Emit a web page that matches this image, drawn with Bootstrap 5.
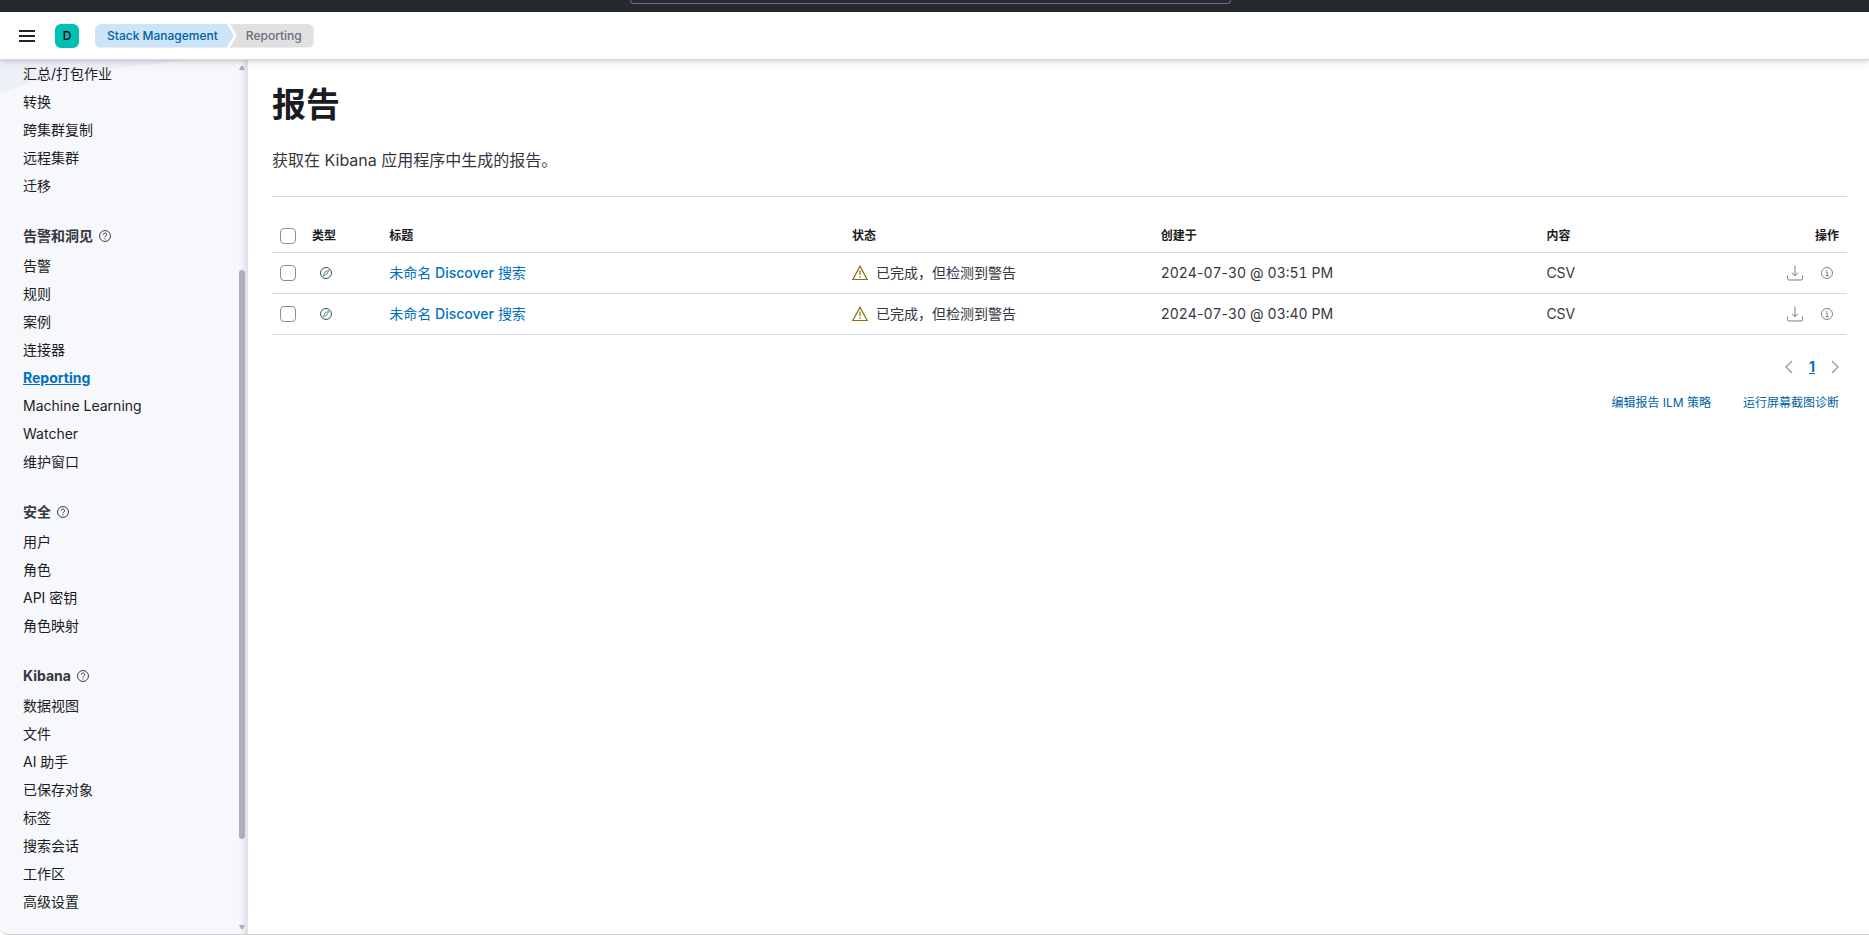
<!DOCTYPE html>
<html lang="zh-CN">
<head>
<meta charset="utf-8">
<meta name="viewport" content="width=device-width, initial-scale=1">
<title>Reporting - Stack Management</title>
<link href="https://cdn.jsdelivr.net/npm/bootstrap@5.3.0/dist/css/bootstrap.min.css" rel="stylesheet">
<style>
body { font-family: Inter, "Noto Sans CJK SC", sans-serif; font-size: 14px; line-height: 20px; color: #343741; background: #fff; }
a { color: #0071c2; text-decoration: none; }
a:hover { text-decoration: underline; }
.darkbar { height: 12px; padding-right: 8px; background: #25282f; }
.global-search { width: 601px; height: 4px; border: 1px solid #69707d; border-top: 0; border-radius: 0 0 4px 4px; }
.appbar { height: 48px; padding-left: 19px; border-bottom: 1px solid #d3dae6; box-shadow: 0 1px 4px rgba(0,0,0,.15), 0 3px 10px rgba(0,0,0,.07); background: #fff; z-index: 2; }
.menu-btn { width: 16px; height: 16px; margin-right: 20px; }
.space-btn { width: 24px; height: 24px; border-radius: 6px; background: #00bfb3; color: #000; font-size: 12px; line-height: 24px; font-weight: 500; }
.crumbs { font-size: 12px; line-height: 24px; font-weight: 500; }
.crumb-first { padding: 0 16px 0 12px; color: #0061a6; background: #cce4f5; border-radius: 6px 0 0 6px; clip-path: polygon(0 0, calc(100% - 7px) 0, 100% 50%, calc(100% - 7px) 100%, 0 100%); }
.crumb-last { margin-left: -4px; padding: 0 12px 0 16px; color: #69707d; background: #e0e0e1; border-radius: 0 6px 6px 0; clip-path: polygon(0 0, 100% 0, 100% 100%, 0 100%, 7px 50%); }
.side { width: 248px; background: #f6f8fc; border-bottom: 1px solid #d0d0d3; border-radius: 0 0 0 8px; box-shadow: inset -3px 0 #e2e3e9, inset -9px 0 6px -5px #dfe1e8; }
.side-art { width: 200px; height: 36px; }
.side-list { padding: 0 12px 18px 23px; }
.side-list li { height: 28px; line-height: 28px; }
.side-list a { color: #1a1c21; }
.side-list a.current { color: #0071c2; font-weight: 700; text-decoration: underline; }
.side h2 { font-size: 14px; line-height: 24px; font-weight: 700; margin: 24px 0 4px; gap: 6px; }
.scroller { width: 6px; top: 5px; bottom: 4px; right: 3px; }
.thumb { background: #abb0ba; border-radius: 3px; flex: 569 0 0; }
.page-body { padding: 25px 22px 24px 24px; border-bottom: 1px solid #d0d0d3; }
h1 { font-size: 34px; line-height: 40px; font-weight: 700; color: #1a1c21; margin: 0 0 23px; }
.intro { font-size: 16px; line-height: 24px; padding-bottom: 24px; margin-bottom: 23px; border-bottom: 1px solid #d3dae6; }
.reports { table-layout: fixed; width: 100%; border-collapse: separate; border-spacing: 0; }
.reports th, .reports td { padding: 0 8px; border-bottom: 1px solid #d3dae6; vertical-align: middle; }
.reports th { height: 33px; font-size: 12px; font-weight: 600; color: #1a1c21; }
.reports td { height: 41px; }
.reports .form-check-input { display: block; width: 16px; height: 16px; margin: 0; border: 1px solid #8b8d93; border-radius: 4px; }
.created b { font-weight: 400; font-variant-numeric: tabular-nums; }
.icon-btn { width: 16px; height: 16px; color: #7b7d83; }
.icon { display: block; flex: none; fill: none; stroke: currentColor; }
.shape { display: block; flex: none; }
.pager { padding: 22px 8px 0 0; gap: 16px; color: #98a2b3; }
.pager a { font-weight: 700; text-decoration: underline; }
.foot { font-size: 12px; padding: 16px 8px 0 0; gap: 32px; }
.foot a { color: #0061a6; }
</style>
</head>
<body class="d-flex flex-column min-vh-100">
<svg class="d-none" aria-hidden="true">
  <symbol id="help" viewBox="0 0 16 16"><g stroke-width="1.300"><circle cx="8" cy="8" r="7.300"/><path d="M5.800 6.200a2.200 2.200 0 1 1 3.400 1.800C8.300 8.600 8 8.900 8 9.900M8 11.200v1.400"/></g></symbol>
  <symbol id="compass" viewBox="0 0 16 16"><circle cx="8" cy="8" r="7.300" stroke="#343741" stroke-width="1.200"/><path stroke="#017d73" d="M11.800 4.200 9.300 9.300 4.200 11.800 6.700 6.700z"/></symbol>
  <symbol id="warning" viewBox="0 0 16 16"><path stroke-width="1.200" d="M8 1.200 15.200 14.500H.800zM8 5.500V10M8 11.200v1.500"/></symbol>
  <symbol id="download" viewBox="0 0 16 16"><path d="M8 .500v10M4.800 7.600 8 10.700l3.200-3.100M.500 10.500v3a1.500 1.500 0 0 0 1.500 1.500h12a1.500 1.500 0 0 0 1.500-1.500v-3"/></symbol>
  <symbol id="info" viewBox="0 0 16 16"><g stroke-width="1.300"><circle cx="8" cy="8" r="7.300"/><path d="M6.300 6.700H8.300v4.700M6 11.500h4.600M7.700 3.700v1.500"/></g></symbol>
</svg>

<div class="darkbar d-flex justify-content-center align-items-start"><div class="global-search"></div></div>
<header class="appbar d-flex align-items-center position-relative">
  <button class="menu-btn btn border-0 p-0 text-dark" aria-label="菜单"><svg class="icon" width="16" height="16" stroke-width="2"><path d="M0 3h16M0 8h16M0 13h16"/></svg></button>
  <button class="space-btn btn border-0 p-0 me-3">D</button>
  <nav class="crumbs d-flex" aria-label="breadcrumb"><a class="crumb-first" href="#">Stack Management</a><span class="crumb-last">Reporting</span></nav>
</header>

<div class="d-flex flex-grow-1">
  <aside class="side position-relative flex-shrink-0">
    <svg class="shape side-art position-absolute top-0 start-0" viewBox="0 0 200 36"><path fill="#edf0f7" d="M0 0h190L78 12 34 22 0 33z"/></svg>
    <nav class="side-list position-relative">
      <ul class="list-unstyled m-0">
        <li><a href="#">汇总/打包作业</a></li><li><a href="#">转换</a></li><li><a href="#">跨集群复制</a></li><li><a href="#">远程集群</a></li><li><a href="#">迁移</a></li>
      </ul>
      <h2 class="d-flex align-items-center">告警和洞见 <svg class="icon" width="12" height="12"><use href="#help"/></svg></h2>
      <ul class="list-unstyled m-0">
        <li><a href="#">告警</a></li><li><a href="#">规则</a></li><li><a href="#">案例</a></li><li><a href="#">连接器</a></li><li><a class="current" href="#">Reporting</a></li><li><a href="#">Machine Learning</a></li><li><a href="#">Watcher</a></li><li><a href="#">维护窗口</a></li>
      </ul>
      <h2 class="d-flex align-items-center">安全 <svg class="icon" width="12" height="12"><use href="#help"/></svg></h2>
      <ul class="list-unstyled m-0">
        <li><a href="#">用户</a></li><li><a href="#">角色</a></li><li><a href="#">API 密钥</a></li><li><a href="#">角色映射</a></li>
      </ul>
      <h2 class="d-flex align-items-center">Kibana <svg class="icon" width="12" height="12"><use href="#help"/></svg></h2>
      <ul class="list-unstyled m-0">
        <li><a href="#">数据视图</a></li><li><a href="#">文件</a></li><li><a href="#">AI 助手</a></li><li><a href="#">已保存对象</a></li><li><a href="#">标签</a></li><li><a href="#">搜索会话</a></li><li><a href="#">工作区</a></li><li><a href="#">高级设置</a></li>
      </ul>
    </nav>
    <div class="scroller position-absolute d-flex flex-column" aria-hidden="true">
      <svg class="shape" width="6" height="5"><path fill="#a9adb8" d="M0 5 2 1h2l2 4z"/></svg>
      <div style="flex:200 0 0"></div><div class="thumb"></div><div style="flex:86 0 0"></div>
      <svg class="shape" width="6" height="5"><path fill="#a9adb8" d="M0 0h6L4 4H2z"/></svg>
    </div>
  </aside>

  <main class="page-body flex-grow-1">
    <h1>报告</h1>
    <p class="intro">获取在 Kibana 应用程序中生成的报告。</p>
    <table class="reports">
      <colgroup><col style="width:32px"><col style="width:5%"><col style="width:30%"><col style="width:20%"><col style="width:25%"><col style="width:20%"></colgroup>
      <thead><tr><th><input class="form-check-input" type="checkbox" aria-label="选择所有行"></th><th>类型</th><th>标题</th><th>状态</th><th>创建于</th><th><div class="d-flex justify-content-between"><span>内容</span><span>操作</span></div></th></tr></thead>
      <tbody>
        <tr><td><input class="form-check-input" type="checkbox" aria-label="选择此行"></td><td><svg class="icon ms-2" width="12" height="12"><use href="#compass"/></svg></td><td><a href="#">未命名 <span class="fw-medium">Discover</span> 搜索</a></td>
          <td><div class="d-flex align-items-center gap-2"><svg class="icon" width="16" height="16" color="#8a6a0a"><use href="#warning"/></svg>已完成，但检测到警告</div></td><td class="created"><b>2024</b>-<b>07</b>-<b>30</b> @ <b>03:51</b> PM</td>
          <td><div class="d-flex align-items-center gap-3"><span class="me-auto">CSV</span><button class="icon-btn btn border-0 p-0" aria-label="下载"><svg class="icon" width="16" height="16"><use href="#download"/></svg></button><button class="icon-btn btn border-0 p-0 me-1 d-flex align-items-center justify-content-center" aria-label="详情"><svg class="icon" width="12" height="12"><use href="#info"/></svg></button></div></td></tr>
        <tr><td><input class="form-check-input" type="checkbox" aria-label="选择此行"></td><td><svg class="icon ms-2" width="12" height="12"><use href="#compass"/></svg></td><td><a href="#">未命名 <span class="fw-medium">Discover</span> 搜索</a></td>
          <td><div class="d-flex align-items-center gap-2"><svg class="icon" width="16" height="16" color="#8a6a0a"><use href="#warning"/></svg>已完成，但检测到警告</div></td><td class="created"><b>2024</b>-<b>07</b>-<b>30</b> @ <b>03:40</b> PM</td>
          <td><div class="d-flex align-items-center gap-3"><span class="me-auto">CSV</span><button class="icon-btn btn border-0 p-0" aria-label="下载"><svg class="icon" width="16" height="16"><use href="#download"/></svg></button><button class="icon-btn btn border-0 p-0 me-1 d-flex align-items-center justify-content-center" aria-label="详情"><svg class="icon" width="12" height="12"><use href="#info"/></svg></button></div></td></tr>
      </tbody>
    </table>
    <nav class="pager d-flex justify-content-end align-items-center" aria-label="分页"><svg class="icon" width="8" height="14" stroke-width="1.500"><path d="M7 1 1 7l6 6"/></svg><a href="#">1</a><svg class="icon" width="8" height="14" stroke-width="1.500"><path d="m1 1 6 6-6 6"/></svg></nav>
    <div class="foot d-flex justify-content-end"><a href="#">编辑报告 ILM 策略</a><a href="#">运行屏幕截图诊断</a></div>
  </main>
</div>
<script src="https://cdn.jsdelivr.net/npm/bootstrap@5.3.0/dist/js/bootstrap.bundle.min.js"></script>
</body>
</html>
